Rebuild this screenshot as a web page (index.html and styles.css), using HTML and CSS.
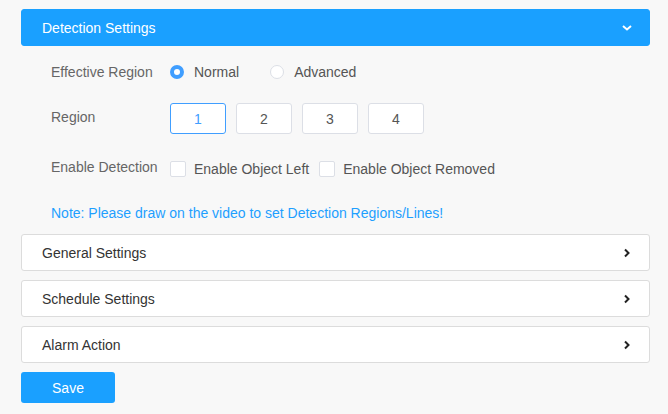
FILE: index.html
```html
<!DOCTYPE html>
<html lang="en">
<head>
<meta charset="UTF-8">
<title>Detection Settings</title>
<link rel="stylesheet" href="styles.css">
</head>
<body>
    <div class="settings">
        <!-- open panel -->
        <div class="panel-head active">
            <span>Detection Settings</span>
            <svg class="chevron" width="10" height="6" viewBox="0 0 10 6"><path d="M1 1l4 3.5 4-3.5" fill="none" stroke="#fff" stroke-width="2"/></svg>
        </div>
        <div class="panel-body">
            <div class="row row-radio">
                <span class="label">Effective Region</span>
                <label class="option"><span class="radio checked"></span>Normal</label>
                <label class="option"><span class="radio"></span>Advanced</label>
            </div>
            <div class="row row-region">
                <span class="label">Region</span>
                <button class="region-btn selected">1</button>
                <button class="region-btn">2</button>
                <button class="region-btn">3</button>
                <button class="region-btn">4</button>
            </div>
            <div class="row row-check">
                <span class="label">Enable Detection</span>
                <label class="option check-option"><span class="checkbox"></span>Enable Object Left</label>
                <label class="option check-option"><span class="checkbox"></span>Enable Object Removed</label>
            </div>
            <p class="note">Note: Please draw on the video to set Detection Regions/Lines!</p>
        </div>

        <!-- closed panels -->
        <div class="panel-head">
            <span>General Settings</span>
            <svg class="arrow" width="6" height="10" viewBox="0 0 6 10"><path d="M1 1.5l3.5 3.5L1 8.5" fill="none" stroke="#222" stroke-width="2"/></svg>
        </div>
        <div class="panel-head">
            <span>Schedule Settings</span>
            <svg class="arrow" width="6" height="10" viewBox="0 0 6 10"><path d="M1 1.5l3.5 3.5L1 8.5" fill="none" stroke="#222" stroke-width="2"/></svg>
        </div>
        <div class="panel-head">
            <span>Alarm Action</span>
            <svg class="arrow" width="6" height="10" viewBox="0 0 6 10"><path d="M1 1.5l3.5 3.5L1 8.5" fill="none" stroke="#222" stroke-width="2"/></svg>
        </div>

        <button class="save-btn">Save</button>
    </div>
</body>
</html>
```

FILE: styles.css
```css
body, html {
    margin: 0;
    background-color: #f8f8f8;
    font-family: "Liberation Sans", Arial, sans-serif;
    font-size: 14px;
    color: #666;
}
.settings {
    width: 629px;
    padding: 9px 0 0 21px;
}
.panel-head {
    display: flex;
    align-items: center;
    justify-content: space-between;
    box-sizing: border-box;
    height: 37px;
    padding: 0 19px 0 20px;
    margin-bottom: 9px;
    background-color: white;
    border: 1px solid #dcdcdc;
    border-radius: 3px;
    color: #333;
}
.panel-head.active {
    background-color: #1aa0ff;
    border-color: #1aa0ff;
    color: white;
    margin-bottom: 0;
    padding-right: 17px;
}
.panel-body {
    padding: 12px 0 11px 30px;
}
.row {
    display: flex;
    align-items: center;
}
.label {
    width: 119px;
    color: #666;
}
.row-radio {
    height: 28px;
}
.row-region {
    height: 31px;
    margin-top: 17px;
}
.row-region .label,
.row-check .label {
    margin-top: -3px;
}
.row-check {
    height: 31px;
    margin-top: 19px;
}
.option {
    display: flex;
    align-items: center;
    color: #555;
    margin-right: 31px;
}
.radio {
    box-sizing: border-box;
    width: 14px;
    height: 14px;
    margin-right: 10px;
    border: 1px solid #dcdfe6;
    border-radius: 50%;
    background-color: white;
}
.radio.checked {
    border: 4.5px solid #409eff;
}
.check-option {
    margin-right: 10px;
    padding-top: 1px;
}
.checkbox {
    box-sizing: border-box;
    width: 16px;
    height: 16px;
    margin-right: 8px;
    border: 1px solid #dcdfe6;
    border-radius: 2px;
    background-color: white;
}
.region-btn {
    width: 56px;
    height: 31px;
    margin-right: 10px;
    background-color: white;
    border: 1px solid #dcdfe6;
    border-radius: 3px;
    color: #555;
    font-family: "Liberation Sans", Arial, sans-serif;
    font-size: 14px;
    padding: 0;
}
.region-btn.selected {
    border-color: #409eff;
    color: #409eff;
}
.note {
    margin: 19px 0 0 0;
    line-height: 20px;
    color: #1e9fff;
}
.save-btn {
    width: 94px;
    height: 31px;
    background-color: #1aa0ff;
    border: none;
    border-radius: 3px;
    color: white;
    font-family: "Liberation Sans", Arial, sans-serif;
    font-size: 14px;
}
```
